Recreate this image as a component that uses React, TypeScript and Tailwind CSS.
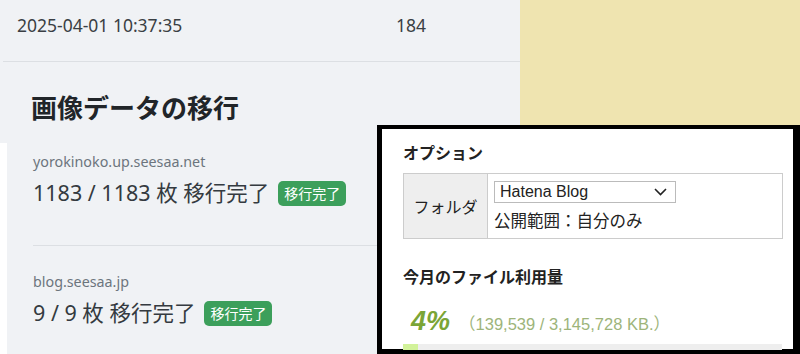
const leftFont = { fontFamily: '"Noto Sans", "Noto Sans CJK JP", sans-serif' }
const boxFont = { fontFamily: '"Liberation Sans", "Noto Sans CJK JP", sans-serif' }

type Site = { domain: string; count: string }

const sites: Site[] = [
  { domain: 'yorokinoko.up.seesaa.net', count: '1183 / 1183' },
  { domain: 'blog.seesaa.jp', count: '9 / 9' },
]

function Badge() {
  return (
    <span className="ml-[9px] inline-flex h-[25px] items-center rounded-[5px] bg-[#3c9f5b] px-[6px] text-[14px] text-white">
      移行完了
    </span>
  )
}

function SiteItem({ site, last }: { site: Site; last: boolean }) {
  return (
    <div className={last ? 'pt-[26px]' : 'border-b border-[#dcdfe3] pt-[26px] pb-[34px]'}>
      <div className="text-[14.3px] leading-[20px] text-[#6c757d]">{site.domain}</div>
      <div className="mt-[3px] flex h-[36px] items-center text-[21.5px] text-[#343a40]">
        <span>{site.count} 枚 移行完了</span>
        <Badge />
      </div>
    </div>
  )
}

export default function App() {
  return (
    <div className="relative h-[354px] w-[800px] overflow-hidden bg-[#efe4b0]">
      <div className="h-full w-[520px] bg-[#f0f2f5]" style={leftFont}>
        <div className="ml-[3px] flex h-[62px] border-b border-[#dcdfe3] pt-[13px] text-[17.5px] leading-[24px] text-[#3a3f44]">
          <span className="ml-[14px] w-[379px]">2025-04-01 10:37:35</span>
          <span>184</span>
        </div>
        <h2 className="mt-[28px] pl-[31px] text-[26px] font-bold leading-[36px] text-[#212529]">
          画像データの移行
        </h2>
        <div className="pl-[33px]">
          {sites.map((s, i) => (
            <SiteItem key={s.domain} site={s} last={i === sites.length - 1} />
          ))}
        </div>
      </div>
      <div className="absolute bottom-0 left-0 top-[143px] w-[7px] bg-white" />

      <div
        className="absolute left-[377px] top-[125px] h-[229px] w-[423px] border-[5px] border-r-[7px] border-t-[4px] border-black bg-white pl-[21px] pr-[10px] text-[#222]"
        style={boxFont}
      >
        <div className="mt-[15px] text-[16px] font-bold leading-[20px]">オプション</div>
        <div className="mt-[9px] flex h-[66px] border border-[#cccccc]">
          <div className="flex w-[84px] items-center justify-center border-r border-[#cccccc] bg-[#eeeeee] pt-[4px] text-[16px]">
            フォルダ
          </div>
          <div className="pl-[6px] pt-[7px]">
            <div className="flex h-[22px] w-[182px] items-center justify-between border border-[#bbbbbb] pl-[5px] pr-[8px] text-[16px]">
              <span>Hatena Blog</span>
              <svg width="13" height="8" viewBox="0 0 13 8" fill="none" stroke="#222" strokeWidth="1.6">
                <path d="M1 1l5.5 5.5L12 1" />
              </svg>
            </div>
            <div className="mt-[6px] text-[16.5px] leading-[24px]">公開範囲：自分のみ</div>
          </div>
        </div>
        <div className="mt-[29px] text-[16px] font-bold leading-[20px]">今月のファイル利用量</div>
        <div className="mt-[16px] flex items-baseline">
          <span className="ml-[8px] text-[27px] font-bold italic leading-[34px] text-[#7ba536]">4%</span>
          <span className="ml-[9px] text-[16.5px] text-[#9db47a]">（139,539 / 3,145,728 KB.）</span>
        </div>
        <div className="mt-[6px] h-[6px] w-[379px] bg-[#eeeeee]">
          <div className="h-full w-[15px] bg-[#d2f29a]" />
        </div>
      </div>
    </div>
  )
}
